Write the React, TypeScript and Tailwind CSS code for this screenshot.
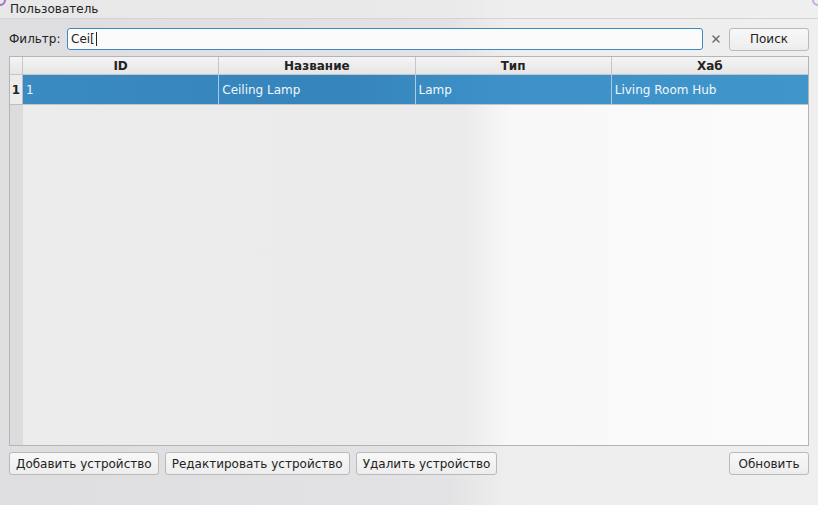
import { X } from "lucide-react";

const columns = ["ID", "Название", "Тип", "Хаб"];
const rows = [["1", "Ceiling Lamp", "Lamp", "Living Room Hub"]];

function Button({ label, className = "" }: { label: string; className?: string }) {
  return (
    <button
      className={`h-[23px] rounded-[3px] border border-[#b9b9b9] bg-gradient-to-b from-[#f8f8f8] to-[#ededed] px-[6px] text-[12px] leading-none text-[#232323] ${className}`}
    >
      {label}
    </button>
  );
}

export default function App() {
  return (
    <div
      className="relative flex h-[505px] w-[818px] flex-col overflow-hidden text-[12px] text-[#232323] bg-[linear-gradient(to_right,#dedee1_0%,#e3e3e5_55%,#eeeeee_62%,#efefef_100%)]"
      style={{ fontFamily: '"DejaVu Sans", "Noto Sans", sans-serif' }}
    >
      {/* desktop corners peeking through */}
      <div className="pointer-events-none absolute -left-[6px] -top-[6px] h-[12px] w-[12px] rounded-full border-2 border-[#a070c8]" />
      <div className="pointer-events-none absolute -right-[6px] -top-[6px] h-[12px] w-[12px] rounded-full border-2 border-[#c8a8e0]" />

      {/* title */}
      <div className="flex h-[19px] items-center border-b border-[#d4d4d4] bg-[#efefef]/60 pl-[10px]">
        <span className="leading-none">Пользователь</span>
      </div>

      {/* filter row */}
      <div className="mt-[9px] flex h-[22px] items-center pl-[9px] pr-[9px]">
        <span className="w-[58px]">Фильтр:</span>
        <div className="flex h-[22px] flex-1 items-center rounded-[3px] border border-[#3c8ac4] bg-[#fbfbfb] pl-[3px]">
          <span>Cei[</span>
          <span className="ml-[1px] h-[14px] w-px bg-[#232323]" />
        </div>
        <div className="flex w-[26px] items-center justify-center">
          <X size={12} strokeWidth={3} className="text-[#6b6b6b]" />
        </div>
        <Button label="Поиск" className="w-[80px] h-[22px]" />
      </div>

      {/* table */}
      <div className="mx-[9px] mt-[6px] flex h-[390px] flex-col border border-[#b4b4b4] bg-[#ebebeb]">
        <div className="flex h-[18px] border-b border-[#c6c6c6] bg-gradient-to-b from-[#f4f4f4] to-[#e6e6e6]">
          <div className="w-[13px] border-r border-[#c6c6c6]" />
          <div className="grid flex-1 grid-cols-4">
            {columns.map((c) => (
              <div
                key={c}
                className="flex items-center justify-center border-r border-[#c6c6c6] font-bold leading-none last:border-r-0"
              >
                {c}
              </div>
            ))}
          </div>
        </div>
        <div className="flex flex-1">
          <div className="flex w-[13px] flex-col bg-[#dcdcdc]">
            {rows.map((r) => (
              <div
                key={r[0]}
                className="flex h-[30px] items-center justify-center border-b border-r border-[#bdbdbd] bg-[#ececec] font-bold"
              >
                {r[0]}
              </div>
            ))}
          </div>
          <div className="flex flex-1 flex-col bg-[linear-gradient(to_right,#ececec_0%,#ebebec_56%,#f8f8f8_62%,#fbfbfb_100%)]">
            {rows.map((r) => (
              <div
                key={r[0]}
                className="grid h-[30px] grid-cols-4 border-b border-[#c4c4c4] bg-[linear-gradient(to_right,#3a8bc2_0%,#3584bb_40%,#3d91c8_60%,#4095ca_100%)] text-[#f2f7fb]"
              >
                {r.map((v, i) => (
                  <div key={i} className="flex items-center border-r border-[#a9cbe3] pl-[3px] last:border-r-0">
                    {v}
                  </div>
                ))}
              </div>
            ))}
          </div>
        </div>
      </div>

      {/* actions */}
      <div className="mt-[6px] flex items-center gap-[6px] px-[9px]">
        <Button label="Добавить устройство" />
        <Button label="Редактировать устройство" />
        <Button label="Удалить устройство" />
        <Button label="Обновить" className="ml-auto w-[80px]" />
      </div>
    </div>
  );
}
